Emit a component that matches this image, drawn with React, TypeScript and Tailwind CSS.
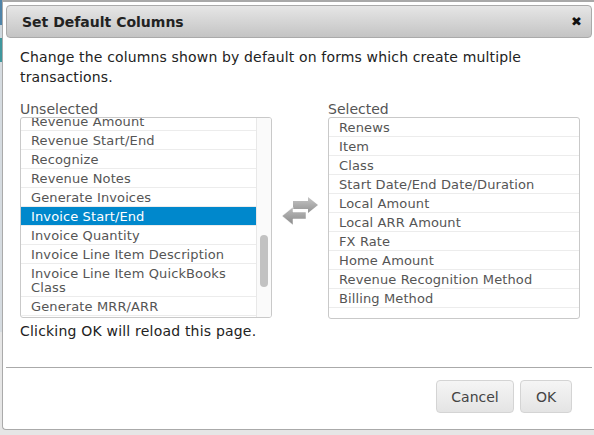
import React from "react";

const unselected = [
  "Revenue Amount",
  "Revenue Start/End",
  "Recognize",
  "Revenue Notes",
  "Generate Invoices",
  "Invoice Start/End",
  "Invoice Quantity",
  "Invoice Line Item Description",
  "Invoice Line Item QuickBooks Class",
  "Generate MRR/ARR",
];

const selected = [
  "Renews",
  "Item",
  "Class",
  "Start Date/End Date/Duration",
  "Local Amount",
  "Local ARR Amount",
  "FX Rate",
  "Home Amount",
  "Revenue Recognition Method",
  "Billing Method",
];

const SwapArrows = () => (
  <svg width="36" height="30" viewBox="0 0 36 30" className="block">
    <defs>
      <linearGradient id="arrowTop" x1="0" y1="0" x2="0" y2="1">
        <stop offset="0" stopColor="#c6c6c6" />
        <stop offset="1" stopColor="#929292" />
      </linearGradient>
      <linearGradient id="arrowBottom" x1="0" y1="0" x2="0" y2="1">
        <stop offset="0" stopColor="#bcbcbc" />
        <stop offset="1" stopColor="#8a8a8a" />
      </linearGradient>
    </defs>
    <path d="M11 4H26V0L36 8L26 16V12H11Z" fill="url(#arrowTop)" />
    <path d="M24 15H11V10L0 19L11 28V22H24Z" fill="url(#arrowBottom)" stroke="#fff" strokeWidth="0.5" />
  </svg>
);

const ListRow = ({ label, active }: { label: string; active?: boolean }) => (
  <li
    className={`px-[10px] pt-[3px] pb-[1px] leading-[14px] tracking-[0.12px] border-b border-[#ececec] ${
      active ? "bg-[#0088cc] text-white" : "text-[#555555]"
    }`}
  >
    {label}
  </li>
);

export default function App() {
  return (
    <div
      className="w-[594px] h-[435px] overflow-hidden flex bg-[#e6e6e6] text-[14px] text-[#222222]"
      style={{ fontFamily: '"DejaVu Sans", Verdana, sans-serif' }}
    >
      <div className="w-[2px] shrink-0 flex flex-col">
        <div className="h-[25px] bg-[#4f84a8]" />
        <div className="h-[13px] bg-[#cfd8de]" />
        <div className="h-[24px] bg-[#3f979d]" />
        <div className="h-[270px] bg-[#d5dbe0]" />
      </div>

      <div className="flex-1 min-w-0">
        <div className="h-[2px] bg-[#a8a8a8]" />
        <div className="w-[600px] h-[428px] bg-white border-l border-b border-[#aaaaaa] rounded-bl-[4px] pt-[3px] pl-[3px]">
          <div className="w-[586px] h-[33px] flex items-center justify-between pl-[15px] pr-[9px] rounded-[4px] border border-[#aaaaaa] bg-gradient-to-b from-[#e6e6e6] to-[#c4c4c4]">
            <span className="font-bold leading-[20px] mt-[1px]">Set Default Columns</span>
            <span className="font-bold text-[13px] text-[#111111] leading-none">✖</span>
          </div>

          <div className="pl-[14px] pt-[9px]">
            <p className="w-[540px] leading-[20px] tracking-[0.15px]">
              Change the columns shown by default on forms which create multiple transactions.
            </p>

            <div className="flex mt-[14px]">
              <div className="w-[252px] shrink-0">
                <div className="leading-[16px] text-[#555555]">Unselected</div>
                <div className="relative h-[201px] overflow-hidden border border-[#c9c9c9] rounded-[3px] text-[13px]">
                  <ul className="w-[236px] mt-[-6px]">
                    {unselected.map((item) => (
                      <ListRow key={item} label={item} active={item === "Invoice Start/End"} />
                    ))}
                  </ul>
                  <div className="absolute top-0 right-0 bottom-0 w-[15px] bg-[#fafafa] border-l border-[#e8e8e8]">
                    <div className="absolute left-[3px] top-[117px] w-[8px] h-[52px] rounded-[4px] bg-[#c2c2c2]" />
                  </div>
                </div>
                <p className="mt-[3px] leading-[20px] tracking-[0.2px]">Clicking OK will reload this page.</p>
              </div>

              <div className="w-[56px] shrink-0 flex justify-center pt-[96px]">
                <div>
                  <SwapArrows />
                </div>
              </div>

              <div className="w-[252px] shrink-0">
                <div className="leading-[16px] text-[#555555]">Selected</div>
                <div className="h-[202px] overflow-hidden border border-[#c9c9c9] rounded-[3px] text-[13px]">
                  <ul>
                    {selected.map((item) => (
                      <ListRow key={item} label={item} />
                    ))}
                  </ul>
                </div>
              </div>
            </div>
          </div>

          <div className="w-[586px] mt-[26px] border-t border-[#aaaaaa] flex justify-end gap-[6px] pt-[12px] pr-[20px]">
            <button className="h-[33px] w-[78px] pt-[1px] rounded-[4px] border border-[#d4d4d4] bg-gradient-to-b from-[#f5f5f5] to-[#e4e4e4] text-[#444444]">
              Cancel
            </button>
            <button className="h-[33px] w-[52px] pt-[1px] rounded-[4px] border border-[#d4d4d4] bg-gradient-to-b from-[#f5f5f5] to-[#e4e4e4] text-[#444444]">
              OK
            </button>
          </div>
        </div>
      </div>
    </div>
  );
}
